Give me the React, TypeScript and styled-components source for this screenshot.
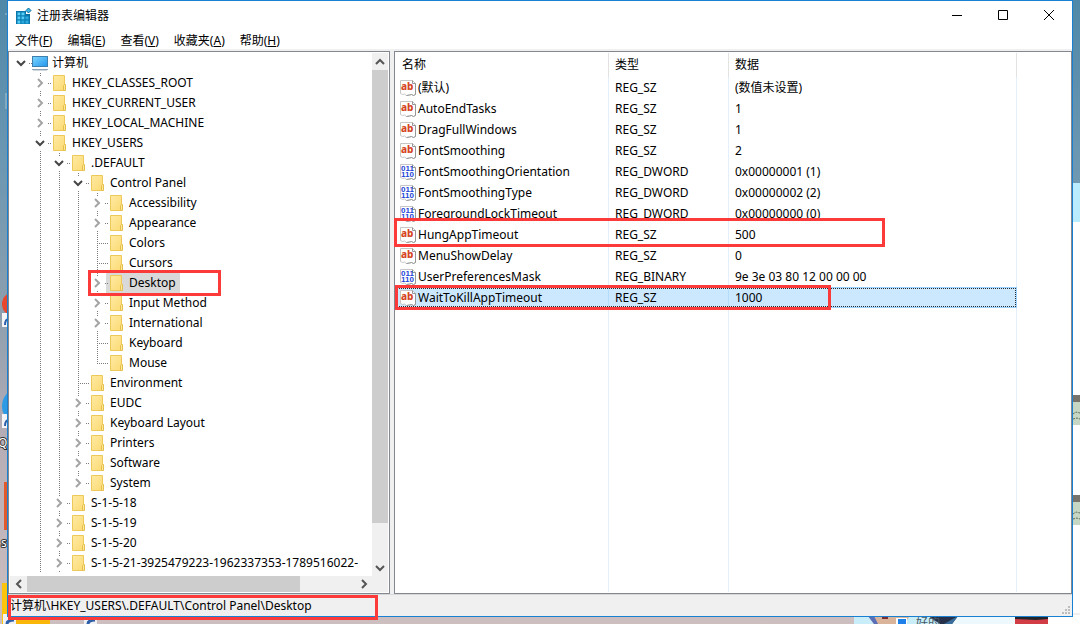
import React from "react";
import styled, { createGlobalStyle, css } from "styled-components";

const GlobalStyle = createGlobalStyle`
  * { box-sizing: border-box; }
  body {
    margin: 0;
    font-family: "Noto Sans", "Noto Sans CJK SC", sans-serif;
    font-size: 12px;
    line-height: 20px;
    color: #000;
  }
  button { font: inherit; color: inherit; border: 0; padding: 0; background: none; }
`;

/* ---------- desktop ---------- */

const Desktop = styled.div`
  position: relative;
  display: flex;
  min-height: 100vh;
  padding: 0 7px 7px;
  overflow: hidden;
  background: linear-gradient(#4f88a8 0, #6b97b2 25%, #8c9fae 50%, #b5adb6 70%, #cdbfc0 100%);
`;

const Scenery = styled.svg<{ $side: "left" | "right" }>`
  position: absolute;
  top: 0;
  ${(p) => (p.$side === "left" ? "left: 0;" : "right: 0;")}
`;

function LeftScenery() {
  return (
    <Scenery $side="left" width="110" height="624" aria-hidden="true">
      <path d="M5 14h2M6 93v16" stroke="#a9c3d0" strokeWidth="1" />
      <circle cx="14" cy="304" r="12" fill="#e8482e" />
      <rect x="2" y="313" width="10" height="14" fill="#f4f4f6" />
      <path d="M5 325q0-6 4-6" stroke="#2d5fa8" strokeWidth="2" fill="none" />
      <circle cx="20" cy="406" r="18" fill="#2e9be4" />
      <rect x="2" y="414" width="10" height="14" fill="#f4f4f6" />
      <path d="M5 426q0-6 4-6" stroke="#2d5fa8" strokeWidth="2" fill="none" />
      <text x="-2" y="447" fontSize="12" fill="#fff" stroke="#333" strokeWidth="2" paintOrder="stroke">Q</text>
      <rect x="4" y="482" width="10" height="48" fill="#e2592c" />
      <text x="1" y="547" fontSize="12" fill="#fff" stroke="#333" strokeWidth="2" paintOrder="stroke">s</text>
      <rect x="2" y="583" width="14" height="41" fill="#fcc40c" />
      <rect x="16" y="617" width="34" height="7" fill="#fbb60a" />
      <rect x="3" y="614" width="13" height="10" fill="#f1f1f4" />
      <path d="M7 624q0-4 7-4" stroke="#2d5fa8" strokeWidth="3" fill="none" />
      <rect x="84" y="614" width="13" height="10" fill="#f1f1f4" />
      <path d="M88 624q0-4 7-4" stroke="#2d5fa8" strokeWidth="3" fill="none" />
    </Scenery>
  );
}

function RightScenery() {
  return (
    <Scenery $side="right" width="230" height="624" aria-hidden="true">
      <rect x="222" y="183" width="8" height="39" fill="#b9ecff" />
      <rect x="198" y="222" width="32" height="402" fill="#fff" />
      <path d="M222 614h8" stroke="#e2e2e2" />
      {[395, 495].map((y) => (
        <g key={y}>
          <rect x="222" y={y} width="8" height="30" fill="#c6d8c4" />
          <rect x="222" y={y} width="8" height="7" fill="#77736a" />
          <path d={`M223 ${y + 19}l3-2 4 1M223 ${y + 24}l4-1 3 1`} stroke="#5e6a5c" strokeDasharray="2 1" fill="none" />
        </g>
      ))}
      <rect x="4" y="616" width="194" height="8" fill="#c9eefa" />
      <rect x="90" y="616" width="75" height="8" fill="#edf9fd" />
      <path d="M18 616h42l-6 8H24z" fill="#d9b49a" />
      <path d="M18 616l6 8h4l-4-8z" fill="#5a6eb8" />
      <path d="M32 618h6" stroke="#7e2f33" strokeWidth="2" />
      <path d="M78 616h30l-6 8H90z" fill="#27324a" />
      <path d="M108 616l-14 8h8z" fill="#3a6e9c" />
      <rect x="46" y="618" width="11" height="6" fill="#fff" />
      <rect x="48" y="619" width="8" height="5" fill="#1e7fe8" />
      <text x="66" y="627" fontSize="12" fill="#4b5b66">好的</text>
      <rect x="165" y="616" width="33" height="8" fill="#d23c44" />
      <path d="M165 616h33v3l-12 1-21-1z" fill="#22262b" />
    </Scenery>
  );
}

/* ---------- window frame ---------- */

const Window = styled.main`
  position: relative;
  flex: 1;
  min-width: 0;
  display: flex;
  flex-direction: column;
  border: 1px solid #1a80d2;
  background: #f0f0f0;
`;

const TitleBar = styled.header`
  display: flex;
  align-items: center;
  height: 30px;
  padding-left: 8px;
  background: #fff;
`;

const Title = styled.h1`
  flex: 1;
  margin: 0 0 0 5px;
  font-size: 12px;
  font-weight: 400;
`;

const CaptionButton = styled.button`
  align-self: flex-start;
  display: grid;
  place-items: center;
  width: 46px;
  height: 29px;
`;

const MenuBar = styled.nav`
  display: flex;
  gap: 1px;
  height: 18px;
  background: #fff;
`;

const MenuItem = styled.button`
  height: 18px;
  padding: 0 7px;
  line-height: 20px;
  white-space: nowrap;
`;

const Panes = styled.div`
  flex: 1;
  display: grid;
  grid-template-columns: minmax(0, 191fr) minmax(0, 339fr);
  gap: 4px;
  padding-top: 2px;
`;

const paneFrame = css`
  border: 1px solid #828790;
  background: #fff;
`;

const StatusBar = styled.footer`
  position: relative;
  display: flex;
  align-items: flex-end;
  justify-content: space-between;
  height: 22px;
  padding: 0 2px 2px;
  border-top: 1px solid #d7d7d7;
`;

const Highlight = styled.span<{ $inset: string; $width: string }>`
  position: absolute;
  z-index: 3;
  inset: ${(p) => p.$inset};
  width: ${(p) => p.$width};
  border: 3px solid #fd3a3a;
  pointer-events: none;
`;

/* ---------- tree ---------- */

const TreePane = styled.section`
  ${paneFrame}
  display: grid;
  grid-template-columns: minmax(0, 1fr) 16px;
  grid-template-rows: 1fr 16px;
  padding: 1px;
`;

const Tree = styled.ul`
  list-style: none;
  margin: 0;
  padding: 0 0 0 1px;
  overflow: hidden;
`;

const TreeRow = styled.li`
  position: relative;
  display: flex;
  height: 20px;
  white-space: nowrap;
`;

type Line = "none" | "full" | "half";

const Guide = styled.span<{ $line: Line; $joint?: boolean }>`
  position: relative;
  flex: none;
  display: flex;
  align-items: center;
  width: 19px;
  &::before {
    content: "";
    position: absolute;
    top: 0;
    left: 10px;
    width: 1px;
    height: ${(p) => ({ none: "0", full: "100%", half: "11px" }[p.$line])};
    background: repeating-linear-gradient(#7c7c7c 0 1px, transparent 1px 2px);
  }
  ${(p) =>
    p.$joint &&
    css`
      &::after {
        content: "";
        position: absolute;
        z-index: 1;
        top: 10px;
        left: 10px;
        width: 11px;
        height: 1px;
        background: repeating-linear-gradient(90deg, #7c7c7c 0 1px, transparent 1px 2px);
      }
    `}
`;

const Toggle = styled.button`
  position: relative;
  z-index: 2;
  display: grid;
  place-items: center;
  width: 15px;
  height: 13px;
  margin-left: 2px;
  background: #fff;
`;

const TreeItem = styled.span<{ $selected?: boolean; $root?: boolean }>`
  display: flex;
  align-items: center;
  gap: 4px;
  padding: 0 4px 0 ${(p) => (p.$root ? 2 : 4)}px;
  background: ${(p) => (p.$selected ? "#d9d9d9" : "transparent")};
`;

function Chevron({ dir, color }: { dir: "up" | "down" | "left" | "right"; color: string }) {
  const paths = {
    right: "M3 1l4 4-4 4",
    left: "M7 1l-4 4 4 4",
    down: "M1 3l4 4 4-4",
    up: "M1 7l4-4 4 4",
  };
  return (
    <svg width="10" height="10" viewBox="0 0 10 10" aria-hidden="true">
      <path d={paths[dir]} fill="none" stroke={color} strokeWidth="2" />
    </svg>
  );
}

function FolderIcon() {
  return (
    <svg width="15" height="16" viewBox="0 0 15 16" aria-hidden="true">
      <defs>
        <linearGradient id="folder" x1="0" y1="0" x2="1" y2="1">
          <stop offset="0" stopColor="#ffeaa4" />
          <stop offset="1" stopColor="#fcdb74" />
        </linearGradient>
      </defs>
      <path d="M.5.5h11v15H.5z" fill="url(#folder)" stroke="#ecc959" />
      <path d="M10.500 15.500v-5l1-1h1v6z" fill="#ffe79a" stroke="#e6bf4b" />
    </svg>
  );
}

function ComputerIcon() {
  return (
    <svg width="16" height="16" viewBox="0 0 16 16" aria-hidden="true">
      <defs>
        <linearGradient id="screen" x1="0" y1="0" x2="1" y2="1">
          <stop offset="0" stopColor="#7fd6ff" />
          <stop offset="1" stopColor="#2196ec" />
        </linearGradient>
      </defs>
      <rect x=".5" y="1.500" width="15" height="10" fill="url(#screen)" stroke="#3f7fae" />
      <path d="M0 14.500h16" stroke="#8fa3b3" />
      <path d="M1 15.500h14" stroke="#cfd8df" />
    </svg>
  );
}

type Node = { label: string; level: number; state?: "open" | "closed"; last?: boolean; selected?: boolean };

const nodes: Node[] = [
  { label: "计算机", level: 0, state: "open" },
  { label: "HKEY_CLASSES_ROOT", level: 1, state: "closed" },
  { label: "HKEY_CURRENT_USER", level: 1, state: "closed" },
  { label: "HKEY_LOCAL_MACHINE", level: 1, state: "closed" },
  { label: "HKEY_USERS", level: 1, state: "open" },
  { label: ".DEFAULT", level: 2, state: "open" },
  { label: "Control Panel", level: 3, state: "open" },
  { label: "Accessibility", level: 4, state: "closed" },
  { label: "Appearance", level: 4, state: "closed" },
  { label: "Colors", level: 4 },
  { label: "Cursors", level: 4 },
  { label: "Desktop", level: 4, state: "closed", selected: true },
  { label: "Input Method", level: 4, state: "closed" },
  { label: "International", level: 4, state: "closed" },
  { label: "Keyboard", level: 4 },
  { label: "Mouse", level: 4, last: true },
  { label: "Environment", level: 3 },
  { label: "EUDC", level: 3, state: "closed" },
  { label: "Keyboard Layout", level: 3, state: "closed" },
  { label: "Printers", level: 3, state: "closed" },
  { label: "Software", level: 3, state: "closed" },
  { label: "System", level: 3, state: "closed", last: true },
  { label: "S-1-5-18", level: 2, state: "closed" },
  { label: "S-1-5-19", level: 2, state: "closed" },
  { label: "S-1-5-20", level: 2, state: "closed" },
  { label: "S-1-5-21-3925479223-1962337353-1789516022-", level: 2, state: "closed" },
];

function TreeNode({ node }: { node: Node }) {
  const ancestors = Array.from({ length: node.level }, (_, i) => i);
  const line: Line = node.level === 0 ? "none" : node.last ? "half" : "full";
  return (
    <TreeRow role="treeitem" aria-level={node.level + 1} aria-selected={!!node.selected}>
      {ancestors.map((i) => (
        <Guide key={i} $line={i === 0 ? "none" : "full"} />
      ))}
      <Guide $line={line} $joint>
        {node.state && (
          <Toggle aria-label={`${node.state === "open" ? "折叠" : "展开"} ${node.label}`}>
            <Chevron dir={node.state === "open" ? "down" : "right"} color={node.state === "open" ? "#454545" : "#a4a4a4"} />
          </Toggle>
        )}
      </Guide>
      <TreeItem $selected={node.selected} $root={node.level === 0}>
        {node.level === 0 ? <ComputerIcon /> : <FolderIcon />}
        {node.label}
      </TreeItem>
      {node.selected && <Highlight $inset="-3px auto -3px 77px" $width="133px" />}
    </TreeRow>
  );
}

/* ---------- scroll bars ---------- */

const ScrollBar = styled.div<{ $vertical?: boolean }>`
  display: flex;
  flex-direction: ${(p) => (p.$vertical ? "column" : "row")};
  min-width: 0;
  background: #f0f0f0;
`;

const ScrollButton = styled.button`
  flex: 0 0 17px;
  display: grid;
  place-items: center;
`;

const ScrollTrack = styled.div`
  flex: 1;
  display: flex;
  flex-direction: inherit;
`;

const ScrollThumb = styled.div<{ $share: number }>`
  flex: 0 0 ${(p) => p.$share}%;
  background: #cdcdcd;
`;

const ScrollCorner = styled.div`
  background: #f0f0f0;
`;

/* ---------- value list ---------- */

const ListPane = styled.section`
  ${paneFrame}
  display: grid;
  padding: 1px 0;
`;

const ValueTable = styled.table`
  width: 622px;
  height: 100%;
  table-layout: fixed;
  border-collapse: separate;
  border-spacing: 0;
  th, td {
    padding: 0 0 0 6px;
    text-align: left;
    font-weight: 400;
    white-space: nowrap;
    border-right: 1px solid #e3effb;
  }
  th { height: 24px; border-right-color: #e2e2e2; }
  th:first-child { padding-left: 7px; }
  td:first-child { padding-left: 5px; }
`;

const ValueRow = styled.tr<{ $selected?: boolean }>`
  position: relative;
  height: 21px;
  background: ${(p) => (p.$selected ? "#cce8ff" : "transparent")};
  ${(p) => p.$selected && "td { border-right-color: #b5dcfb; }"}
`;

const NameCell = styled.div`
  display: flex;
  align-items: center;
  gap: 2px;
  height: 21px;
`;

const FocusRing = styled.span`
  position: absolute;
  inset: 0;
  border: 1px solid #99d1ff;
  &::after {
    content: "";
    position: absolute;
    inset: 0;
    border: 1px dotted #2b2b2b;
  }
`;

function ValueIcon({ binary }: { binary: boolean }) {
  return (
    <svg width="16" height="16" viewBox="0 0 16 16" aria-hidden="true">
      <path d="M.5 13.500V.5h12l3 3v11l-2 1-2-1-2 .5-3 .5-2-1.500-2 .5z" fill="#fff" stroke="#c6c6c6" />
      <path d="M12.500.5v3h3v11l-2 1-2-1-2 .5-3 .5" fill="none" stroke="#969696" />
      {binary ? (
        <g fill="#2345d8" fontFamily="Liberation Sans" fontWeight="700" fontSize="8">
          <text x="1" y="7">011</text>
          <text x="1" y="13">110</text>
        </g>
      ) : (
        <text x="1" y="10" fill="#d5451f" fontFamily="Noto Sans" fontWeight="800" fontSize="10">ab</text>
      )}
    </svg>
  );
}

type Value = { name: string; type: string; data: string; mark?: { inset: string; width: string }; selected?: boolean };

const values: Value[] = [
  { name: "(默认)", type: "REG_SZ", data: "(数值未设置)" },
  { name: "AutoEndTasks", type: "REG_SZ", data: "1" },
  { name: "DragFullWindows", type: "REG_SZ", data: "1" },
  { name: "FontSmoothing", type: "REG_SZ", data: "2" },
  { name: "FontSmoothingOrientation", type: "REG_DWORD", data: "0x00000001 (1)" },
  { name: "FontSmoothingType", type: "REG_DWORD", data: "0x00000002 (2)" },
  { name: "ForegroundLockTimeout", type: "REG_DWORD", data: "0x00000000 (0)" },
  { name: "HungAppTimeout", type: "REG_SZ", data: "500", mark: { inset: "-6px auto -2px -1px", width: "491px" } },
  { name: "MenuShowDelay", type: "REG_SZ", data: "0" },
  { name: "UserPreferencesMask", type: "REG_BINARY", data: "9e 3e 03 80 12 00 00 00" },
  { name: "WaitToKillAppTimeout", type: "REG_SZ", data: "1000", selected: true, mark: { inset: "-2px auto -2px 0", width: "436px" } },
];

/* ---------- application icon and grip ---------- */

function RegistryIcon() {
  return (
    <svg width="16" height="16" viewBox="0 0 16 16" aria-hidden="true">
      <path d="M0 3h10v3h4v10H0z" fill="#0b6f9f" />
      {[0, 1, 2].map((r) =>
        [0, 1, 2].map((c) =>
          r === 0 && c === 2 ? null : (
            <rect key={`${r}${c}`} x={1 + c * 4} y={4 + r * 4} width="4" height="4" fill={r + c > 2 ? "#2aa9dc" : "#56cdf5"} stroke="#0b7fb5" />
          )
        )
      )}
      <path d="M12.500 0L15 2.500 12.500 5 10 2.500z" fill="#3fb6e6" stroke="#0b6f9f" />
    </svg>
  );
}

function Grip() {
  const dots = [[6, 0], [3, 3], [6, 3], [0, 6], [3, 6], [6, 6]];
  return (
    <svg width="8" height="8" viewBox="0 0 8 8" aria-hidden="true">
      {dots.map(([x, y]) => (
        <rect key={`${x}-${y}`} x={x} y={y} width="2" height="2" fill="#bdbdbd" />
      ))}
    </svg>
  );
}

const StatusText = styled.span`
  align-self: center;
  padding-top: 2px;
`;

const menus = [["文件", "F"], ["编辑", "E"], ["查看", "V"], ["收藏夹", "A"], ["帮助", "H"]];

export default function App() {
  return (
    <>
      <GlobalStyle />
      <Desktop>
        <LeftScenery />
        <RightScenery />
        <Window>
          <TitleBar>
            <RegistryIcon />
            <Title>注册表编辑器</Title>
            <CaptionButton aria-label="最小化">
              <svg width="11" height="11"><path d="M0 5.500h10" stroke="#000" /></svg>
            </CaptionButton>
            <CaptionButton aria-label="最大化">
              <svg width="11" height="11"><path d="M.5.500h9v9h-9z" fill="none" stroke="#000" /></svg>
            </CaptionButton>
            <CaptionButton aria-label="关闭">
              <svg width="11" height="11"><path d="M0 0l10 10M10 0L0 10" stroke="#000" /></svg>
            </CaptionButton>
          </TitleBar>
          <MenuBar>
            {menus.map(([label, key]) => (
              <MenuItem key={key}>
                {label}(<u>{key}</u>)
              </MenuItem>
            ))}
          </MenuBar>
          <Panes>
            <TreePane>
              <Tree role="tree">
                {nodes.map((n) => (
                  <TreeNode key={n.label} node={n} />
                ))}
              </Tree>
              <ScrollBar $vertical>
                <ScrollButton aria-label="向上滚动"><Chevron dir="up" color="#555" /></ScrollButton>
                <ScrollTrack><ScrollThumb $share={92.6} /></ScrollTrack>
                <ScrollButton aria-label="向下滚动"><Chevron dir="down" color="#555" /></ScrollButton>
              </ScrollBar>
              <ScrollBar>
                <ScrollButton aria-label="向左滚动"><Chevron dir="left" color="#555" /></ScrollButton>
                <ScrollTrack><ScrollThumb $share={83.3} /></ScrollTrack>
                <ScrollButton aria-label="向右滚动"><Chevron dir="right" color="#555" /></ScrollButton>
              </ScrollBar>
              <ScrollCorner />
            </TreePane>
            <ListPane>
              <ValueTable>
                <colgroup>
                  <col width="214" />
                  <col width="120" />
                  <col width="288" />
                </colgroup>
                <thead>
                  <tr>
                    <th scope="col">名称</th>
                    <th scope="col">类型</th>
                    <th scope="col">数据</th>
                  </tr>
                </thead>
                <tbody>
                  {values.map((v) => (
                    <ValueRow key={v.name} $selected={v.selected}>
                      <td>
                        <NameCell>
                          <ValueIcon binary={v.type !== "REG_SZ"} />
                          {v.name}
                        </NameCell>
                        {v.selected && <FocusRing />}
                        {v.mark && <Highlight $inset={v.mark.inset} $width={v.mark.width} />}
                      </td>
                      <td>{v.type}</td>
                      <td>{v.data}</td>
                    </ValueRow>
                  ))}
                  <tr aria-hidden="true">
                    <td />
                    <td />
                    <td />
                  </tr>
                </tbody>
              </ValueTable>
            </ListPane>
          </Panes>
          <StatusBar>
            <StatusText>计算机\HKEY_USERS\.DEFAULT\Control Panel\Desktop</StatusText>
            <Grip />
            <Highlight $inset="0 auto -4px 0" $width="370px" />
          </StatusBar>
        </Window>
      </Desktop>
    </>
  );
}
